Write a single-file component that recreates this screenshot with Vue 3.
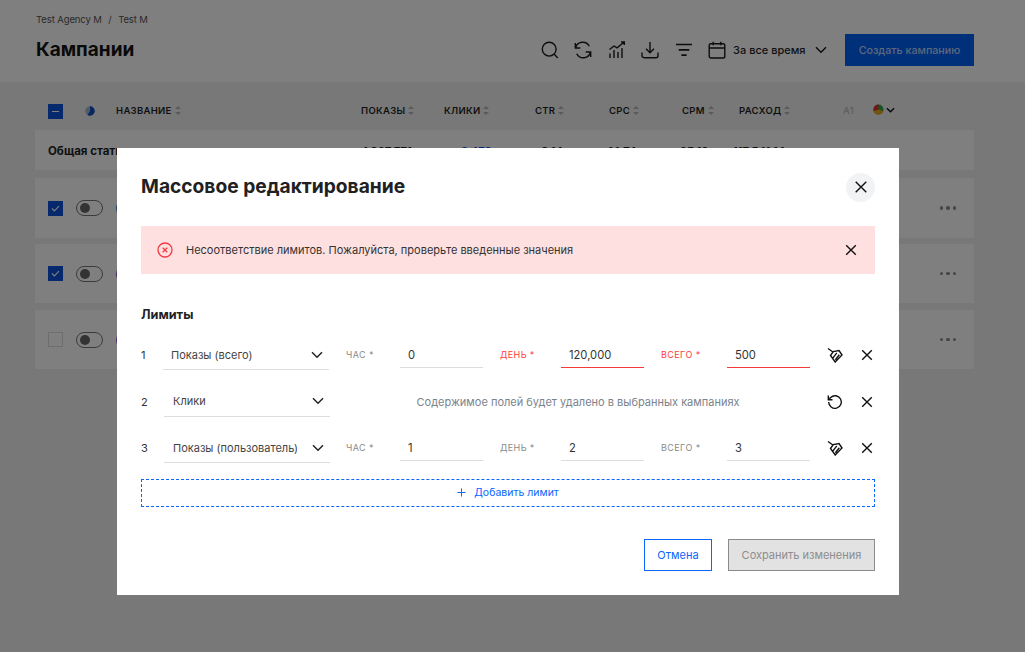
<script setup>
const columns = [
  { label: 'ПОКАЗЫ', cls: 'c-views', total: '1 067 771' },
  { label: 'КЛИКИ', cls: 'c-clicks', total: '3 478' },
  { label: 'CTR', cls: 'c-ctr', total: '0.14' },
  { label: 'CPC', cls: 'c-cpc', total: '14.74' },
  { label: 'CPM', cls: 'c-cpm', total: '25.13' },
  { label: 'РАСХОД', cls: 'c-spend', total: '117 541.14' }
]
const rows = [
  { checked: true, dot: '#2f6fd0' },
  { checked: true, dot: '#8a3fd0' },
  { checked: false, dot: '#8a4fe0' }
]
const limits = [
  { n: 1, name: 'Показы (всего)', hour: '0', day: '120,000', total: '500', dayErr: true, totalErr: true, cls: 'first' },
  { n: 2, name: 'Клики', removed: true },
  { n: 3, name: 'Показы (пользователь)', hour: '1', day: '2', total: '3' }
]
</script>

<template>
  <div class="page">
    <header class="top">
      <div class="top-left">
        <div class="crumbs"><span>Test Agency M</span><span class="sep">/</span><span>Test M</span></div>
        <h1>Кампании</h1>
      </div>
      <div class="tools">
        <svg class="tool" viewBox="0 0 18 18"><circle cx="8.2" cy="8.2" r="6.9"/><path d="M13 13l3.800 4"/></svg>
        <svg class="tool" viewBox="0 0 18 18"><path d="M1.300 2v5h5M1.500 7A7.400 7.400 0 0 1 15.300 5.200M16.700 16v-5h-5M16.500 11A7.400 7.400 0 0 1 2.700 12.800"/></svg>
        <svg class="tool" viewBox="0 0 18 18"><path d="M1.500 8.500L6 5l3 1.800L16 1.200M13 1h3.300v3M2 17v-4.500M6 17V9M10 17v-6M14 17V7"/></svg>
        <svg class="tool" viewBox="0 0 18 18"><path d="M9 1v10.500M5 7.800l4 4 4-4M1 11.400v3.300A2 2 0 0 0 3 16.700h12a2 2 0 0 0 2-2v-3.300"/></svg>
        <svg class="tool" viewBox="0 0 18 18"><path d="M1 3.500h16M3.700 8.800h10.600M6.400 14.200h5.200" stroke-width="1.700"/></svg>
        <div class="date">
          <svg class="tool" viewBox="0 0 18 18"><rect x="1.200" y="2.700" width="15.600" height="14.300" rx="1.800"/><path d="M1.200 7h15.600M5.200 .8v3.400M12.800 .8v3.400"/></svg>
          <span class="date-text">За все время</span>
          <svg class="chev" viewBox="0 0 12 8"><path d="M1 1.200l5 5 5-5"/></svg>
        </div>
        <button class="create">Создать кампанию</button>
      </div>
    </header>

    <main class="body">
      <div class="thead">
        <span class="cb indeterminate"><i></i></span>
        <svg class="pie" viewBox="0 0 10 10"><circle cx="5" cy="5" r="4.700" fill="#a9b4cc"/><path d="M5 5V.3A4.700 4.700 0 0 1 5 9.700 4.700 4.700 0 0 1 2.500 9Z" fill="#0a4fc4"/></svg>
        <span class="th c-name">НАЗВАНИЕ<em class="sort"></em></span>
        <span v-for="c in columns" :key="c.label" class="th" :class="c.cls">{{ c.label }}<em class="sort"></em></span>
        <span class="th c-a1">A1</span>
        <span class="th c-flag"><svg class="mini-pie" viewBox="0 0 12 12"><circle cx="6" cy="6" r="5.500" fill="#2fa84a"/><path d="M6 6V.5A5.500 5.500 0 0 0 .8 7.800Z" fill="#d9342b"/><path d="M6 6L.8 7.800A5.500 5.500 0 0 0 11.200 7.800Z" fill="#f0a020"/></svg><svg class="mini-chev" viewBox="0 0 10 6"><path d="M1 1l4 4 4-4"/></svg></span>
      </div>
      <div class="total">
        <span class="total-name">Общая статистика</span>
        <span v-for="c in columns" :key="c.label" class="tv" :class="c.cls">{{ c.total }}</span>
      </div>
      <div v-for="(r, i) in rows" :key="i" class="row" :class="'row' + i">
        <span class="cb" :class="{ on: r.checked }">
          <svg v-if="r.checked" viewBox="0 0 10 8"><path d="M1 4l2.700 2.700L9 1.300"/></svg>
        </span>
        <span class="toggle"><i></i></span>
        <span class="dot" :style="{ background: r.dot }"></span>
        <span class="more"><i></i><i></i><i></i></span>
      </div>
    </main>

    <div class="overlay">
      <section class="modal">
        <div class="m-head">
          <h2>Массовое редактирование</h2>
          <button class="m-close"><svg viewBox="0 0 12 12"><path d="M.7.700l10.600 10.600M11.300.700L.7 11.300"/></svg></button>
        </div>

        <div class="alert">
          <svg class="alert-ic" viewBox="0 0 16 16"><circle cx="8" cy="8" r="7"/><path d="M5.700 5.700l4.600 4.600M10.300 5.700l-4.600 4.600"/></svg>
          <span>Несоответствие лимитов. Пожалуйста, проверьте введенные значения</span>
          <svg class="x" viewBox="0 0 12 12"><path d="M1.200 1.200l9.600 9.600M10.800 1.200l-9.600 9.600"/></svg>
        </div>

        <h3>Лимиты</h3>

        <div class="limits">
          <div v-for="l in limits" :key="l.n" class="lim" :class="l.cls">
            <span class="num">{{ l.n }}</span>
            <div class="sel">
              <span>{{ l.name }}</span>
              <svg viewBox="0 0 12 8"><path d="M1 1.200l5 5 5-5"/></svg>
            </div>
            <template v-if="l.removed">
              <span class="notice">Содержимое полей будет удалено в выбранных кампаниях</span>
            </template>
            <template v-else>
              <label class="lbl l-hour">ЧАС *</label>
              <div class="inp">{{ l.hour }}</div>
              <label class="lbl l-day" :class="{ err: l.dayErr }">ДЕНЬ *</label>
              <div class="inp" :class="{ err: l.dayErr }">{{ l.day }}</div>
              <label class="lbl l-total" :class="{ err: l.totalErr }">ВСЕГО *</label>
              <div class="inp" :class="{ err: l.totalErr }">{{ l.total }}</div>
            </template>
            <div class="acts">
              <svg v-if="l.removed" class="act" viewBox="0 0 16 16"><path d="M1.700 8A6.300 6.300 0 1 0 3.700 3.400L1.500 5.500M1.300 1.500v4.200h4.200"/></svg>
              <svg v-else class="act" viewBox="0 0 16 16"><path d="M1 1.500L6.300 5.200M3.500 8.500L6.300 4.600 12 3.600 15 8 8.200 15ZM6 10.800L9.800 5.800M8.400 12.800L12.300 7.800"/></svg>
              <svg class="x" viewBox="0 0 12 12"><path d="M1.200 1.200l9.600 9.600M10.800 1.200l-9.600 9.600"/></svg>
            </div>
          </div>
        </div>

        <button class="add"><svg viewBox="0 0 10 10"><path d="M5 .5v9M.5 5h9"/></svg>Добавить лимит</button>

        <div class="foot">
          <button class="cancel">Отмена</button>
          <button class="save">Сохранить изменения</button>
        </div>
      </section>
    </div>
  </div>
</template>

<style scoped>
.page {
  position: relative;
  width: 1025px;
  height: 652px;
  overflow: hidden;
  background: #f1f1f1;
  font-family: Inter, "Noto Sans", sans-serif;
  color: #1f1f1f;
}
.top {
  height: 82px;
  box-sizing: border-box;
  background: #fff;
  padding: 0 51px 0 36px;
  display: flex;
  justify-content: space-between;
}
.crumbs {
  margin-top: 13px;
  font-size: 9.500px;
  letter-spacing: -.1px;
  line-height: 14px;
  color: #555;
  display: flex;
  gap: 6.500px;
}
h1 {
  margin: 10px 0 0;
  font-size: 19px;
  line-height: 26px;
  font-weight: 700;
  color: #151515;
}
.tools {
  display: flex;
  align-items: center;
  gap: 15.500px;
  padding-top: 18px;
  margin-top: 16px;
  height: 32px;
}
.tool {
  width: 18px;
  height: 18px;
  fill: none;
  stroke: #1a1a1a;
  stroke-width: 1.400;
}
.date { display: flex; align-items: center; }
.date-text {
  font-size: 11px;
  font-weight: 500;
  margin-left: 7px;
  white-space: nowrap;
}
.chev {
  width: 12px;
  height: 8px;
  margin-left: 9px;
  fill: none;
  stroke: #1a1a1a;
  stroke-width: 1.500;
}
.create {
  width: 129px;
  height: 32px;
  margin-left: 3px;
  border: 0;
  background: #0360f5;
  color: #b9d0f7;
  font: 500 10.700px Inter, sans-serif;
  padding: 0;
}
.body { padding: 8px 51px 0 35px; }
.thead {
  position: relative;
  height: 40px;
}
.th {
  position: absolute;
  top: 14px;
  font-size: 9.500px;
  line-height: 13px;
  font-weight: 600;
  letter-spacing: .3px;
  white-space: nowrap;
  display: flex;
  align-items: center;
}
.sort {
  position: relative;
  width: 6px;
  height: 9px;
  margin-left: 3px;
}
.sort::before,
.sort::after {
  content: "";
  position: absolute;
  left: 0;
  border-left: 3px solid transparent;
  border-right: 3px solid transparent;
}
.sort::before { top: 0; border-bottom: 3.500px solid #b5b5b5; }
.sort::after { bottom: 0; border-top: 3.500px solid #b5b5b5; }
.thead .cb { position: absolute; left: 13px; top: 14px; }
.pie { position: absolute; left: 50px; top: 16px; width: 10px; height: 10px; }
.c-name { left: 81px; }
.c-views { left: 326px; }
.c-clicks { left: 409px; }
.c-ctr { left: 500px; }
.c-cpc { left: 574px; }
.c-cpm { left: 647px; }
.c-spend { left: 704px; }
.c-a1 { left: 808px; color: #bbb; font-weight: 500; }
.c-flag { left: 838px; top: 14px; }
.mini-pie { width: 11px; height: 11px; }
.mini-chev { width: 9px; height: 6px; margin-left: 2px; fill: none; stroke: #111; stroke-width: 1.500; }
.total {
  position: relative;
  height: 40px;
  background: #fefefe;
}
.total-name {
  position: absolute;
  left: 13px;
  top: 14px;
  font-size: 11.500px;
  line-height: 14px;
  font-weight: 700;
  white-space: nowrap;
}
.tv {
  position: absolute;
  top: 14px;
  font-size: 11px;
  line-height: 14px;
  font-weight: 700;
  white-space: nowrap;
}
.tv.c-views { left: 328px; }
.tv.c-clicks { left: 426px; color: #0a53d8; }
.tv.c-ctr { left: 506px; }
.tv.c-cpc { left: 573px; }
.tv.c-cpm { left: 645px; }
.tv.c-spend { left: 698px; }
.row {
  display: flex;
  align-items: center;
  height: 60px;
  margin-top: 6px;
  background: #fefefe;
  padding: 0 0 0 13px;
}
.row0 { margin-top: 8px; }
.row2 { height: 59px; margin-top: 7px; }
.row1 { height: 59px; }
.cb {
  width: 15px;
  height: 15px;
  box-sizing: border-box;
  border: 1px solid #ddd;
  background: #fff;
  display: flex;
  align-items: center;
  justify-content: center;
}
.cb.on, .cb.indeterminate { background: #0a53d8; border-color: #0a53d8; }
.cb svg { width: 9px; height: 7px; fill: none; stroke: #fff; stroke-width: 1.300; }
.cb i { width: 7px; height: 1px; background: #fff; }
.toggle {
  width: 27px;
  height: 16px;
  margin-left: 13px;
  box-sizing: border-box;
  border: 1px solid #777;
  border-radius: 9px;
  display: flex;
  align-items: center;
  padding-left: 3px;
}
.toggle i { width: 10px; height: 10px; border-radius: 50%; background: #666; }
.dot { width: 20px; height: 20px; border-radius: 50%; margin-left: 13px; }
.more { margin-left: auto; margin-right: 18px; display: flex; gap: 3px; }
.more i { width: 3.500px; height: 3.500px; border-radius: 50%; background: #8c8c8c; }

.overlay {
  position: absolute;
  inset: 0;
  background: rgba(0, 0, 0, .5);
  display: flex;
  justify-content: center;
  align-items: flex-start;
  padding-top: 148px;
  padding-right: 9px;
  box-sizing: border-box;
}
.modal {
  width: 782px;
  height: 447px;
  box-sizing: border-box;
  padding: 24px 24px 0;
  background: #fff;
}
.m-head {
  display: flex;
  justify-content: space-between;
  align-items: center;
  height: 30px;
}
h2 {
  margin: 0 0 3px;
  font-size: 19.200px;
  font-weight: 700;
  color: #212121;
}
.m-close {
  width: 29px;
  height: 29px;
  border: 0;
  border-radius: 50%;
  background: #f2f3f5;
  display: flex;
  align-items: center;
  justify-content: center;
  padding: 0;
}
.m-close svg { width: 12px; height: 12px; fill: none; stroke: #111; stroke-width: 1.400; }
.alert {
  margin-top: 24px;
  height: 48px;
  background: #ffe0e0;
  display: flex;
  align-items: center;
  padding: 0 18px 0 16px;
  font-size: 11px;
  color: #333;
}
.alert-ic { width: 16px; height: 16px; fill: none; stroke: #f23a44; stroke-width: 1.300; margin-right: 13px; }
.alert span { flex: 1; }
.x { width: 12px; height: 12px; fill: none; stroke: #111; stroke-width: 1.400; }
h3 {
  margin: 33px 0 0;
  font-size: 12.700px;
  line-height: 16px;
  font-weight: 700;
  color: #222;
}
.limits { margin-top: 9px; }
.lim {
  display: flex;
  align-items: center;
  height: 46.500px;
  font-size: 11px;
}
.num { width: 23px; color: #333; flex: none; }
.sel {
  width: 166px;
  flex: none;
  height: 30px;
  box-sizing: border-box;
  border-bottom: 1px solid #ddd;
  display: flex;
  align-items: center;
  justify-content: space-between;
  padding: 0 6px 0 9px;
  color: #444;
  white-space: nowrap;
}
.first .num { width: 22px; }
.first .sel { padding-left: 8px; }
.sel svg { width: 12px; height: 8px; flex: none; fill: none; stroke: #222; stroke-width: 1.500; }
.lbl { font-size: 9px; letter-spacing: .4px; color: #8a8a8a; flex: none; white-space: nowrap; margin-bottom: 2px; }
.l-hour { width: 54px; margin-left: 16px; }
.first .l-hour { margin-left: 17px; }
.l-day { width: 61px; margin-left: 17px; }
.l-total { width: 66px; margin-left: 17px; }
.lbl.err { color: #ff3b3b; }
.inp {
  width: 83px;
  flex: none;
  height: 26px;
  box-sizing: border-box;
  border-bottom: 1px solid #ddd;
  padding-left: 8px;
  line-height: 26px;
  color: #333;
  font-size: 11.200px;
}
.inp.err { border-bottom-color: #f23a3a; }
.notice {
  flex: 1;
  text-align: center;
  color: #7b838c;
  margin-left: 16px;
  white-space: nowrap;
  font-size: 11px;
}
.acts {
  flex: none;
  width: 65px;
  display: flex;
  align-items: center;
  justify-content: space-between;
  padding: 0 2px 0 17px;
  box-sizing: border-box;
}
.act { width: 16px; height: 16px; fill: none; stroke: #111; stroke-width: 1.400; }
.add {
  display: flex;
  align-items: center;
  justify-content: center;
  width: 100%;
  height: 28px;
  margin-top: 7px;
  border: 1px dashed #0a66ff;
  background: #fff;
  color: #0a66ff;
  font: 400 10.500px Inter, sans-serif;
  gap: 8px;
}
.add svg { width: 9px; height: 9px; fill: none; stroke: #0a66ff; stroke-width: 1.100; }
.foot {
  display: flex;
  justify-content: flex-end;
  gap: 16px;
  margin-top: 32px;
}
.foot button {
  height: 32px;
  font: 400 11px Inter, sans-serif;
  padding: 0;
  box-sizing: border-box;
}
.cancel { width: 68px; border: 1px solid #0a66ff; background: #fff; color: #0a66ff; }
.save { width: 147px; border: 1px solid #8a8a8a; background: #e2e2e2; color: #8d8d8d; }
</style>
